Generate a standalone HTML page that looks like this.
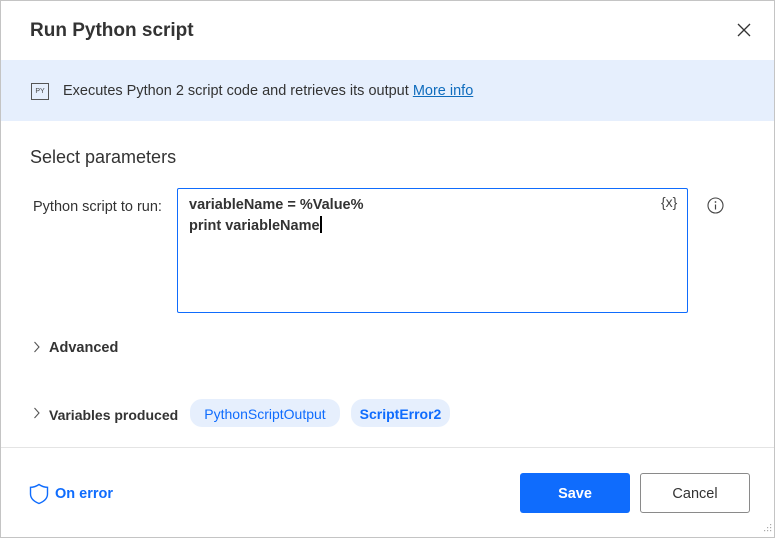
<!DOCTYPE html>
<html><head><meta charset="utf-8"><style>
*{margin:0;padding:0;box-sizing:border-box}
body{width:775px;height:538px;position:relative;background:#fff;font-family:"Liberation Sans",sans-serif;color:#242424;overflow:hidden}
.frame{position:absolute;left:0;top:0;width:775px;height:538px;border:1px solid #c4c4c4}
.a{position:absolute;white-space:nowrap}
</style></head><body>
<div class="frame"></div>
<div class="a" style="left:30px;top:20px;font-size:19px;font-weight:bold;color:#333">Run Python script</div>
<svg class="a" style="left:737px;top:23px" width="14" height="14" viewBox="0 0 14 14"><path d="M1 1L13 13M13 1L1 13" stroke="#333" stroke-width="1.3"/></svg>
<div class="a" style="left:1px;top:60px;width:773px;height:61px;background:#e6effd"></div>
<div class="a" style="left:31px;top:83px;width:18px;height:17px;border:1px solid #555;font-size:7px;line-height:15px;text-align:center;color:#444">PY</div>
<div class="a" style="left:63px;top:83px;font-size:14.5px;color:#333">Executes Python 2 script code and retrieves its output <span style="color:#0f6cbd;text-decoration:underline">More info</span></div>
<div class="a" style="left:30px;top:147px;font-size:18px;color:#333">Select parameters</div>
<div class="a" style="left:33px;top:199px;font-size:14.5px;color:#333">Python script to run:</div>
<div class="a" style="left:177px;top:188px;width:511px;height:125px;border:1px solid #0f6cfd;border-radius:2px"></div>
<div class="a" style="left:189px;top:195px;font-size:14.5px;font-weight:bold;color:#333;line-height:21px">variableName = %Value%<br>print variableName<span style="display:inline-block;width:2px;height:17px;background:#000;vertical-align:-3px"></span></div>
<div class="a" style="left:661px;top:194px;font-size:14px;color:#444">{x}</div>
<svg class="a" style="left:707px;top:197px" width="17" height="17" viewBox="0 0 17 17"><circle cx="8.5" cy="8.5" r="7.5" fill="none" stroke="#444" stroke-width="1.1"/><circle cx="8.5" cy="5" r=".9" fill="#444"/><path d="M8.5 7.5V12.5" stroke="#444" stroke-width="1.2"/></svg>
<svg class="a" style="left:33px;top:341px" width="8" height="12" viewBox="0 0 8 12"><path d="M1.5 1L6 6L1.5 11" fill="none" stroke="#555" stroke-width="1.1"/></svg>
<div class="a" style="left:49px;top:340px;font-size:14.5px;font-weight:bold;color:#333">Advanced</div>
<svg class="a" style="left:33px;top:407px" width="8" height="12" viewBox="0 0 8 12"><path d="M1.5 1L6 6L1.5 11" fill="none" stroke="#555" stroke-width="1.1"/></svg>
<div class="a" style="left:49px;top:407px;font-size:14px;font-weight:bold;color:#333">Variables produced</div>
<div class="a" style="left:190px;top:399px;width:150px;height:28px;border-radius:12px;background:#e6effd;font-size:14px;color:#0f6cfd;line-height:30px;text-align:center">PythonScriptOutput</div>
<div class="a" style="left:351px;top:399px;width:99px;height:28px;border-radius:12px;background:#e6effd;font-size:14px;font-weight:bold;color:#0f6cfd;line-height:30px;text-align:center">ScriptError2</div>
<div class="a" style="left:1px;top:447px;width:773px;height:1px;background:#e4e4e4"></div>
<svg class="a" style="left:29px;top:483px" width="20" height="22" viewBox="0 0 20 22"><path d="M10 1.5C7 3.5 4.5 4.3 1.5 4.3V11C1.5 15.5 5 18.5 10 20.5C15 18.5 18.5 15.5 18.5 11V4.3C15.5 4.3 13 3.5 10 1.5Z" fill="none" stroke="#0f6cfd" stroke-width="1.4"/></svg>
<div class="a" style="left:55px;top:486px;font-size:14.5px;font-weight:bold;color:#0f6cfd">On error</div>
<div class="a" style="left:520px;top:473px;width:110px;height:40px;background:#0f6cfd;border-radius:3px;color:#fff;font-size:14.5px;font-weight:bold;line-height:42px;text-align:center">Save</div>
<div class="a" style="left:640px;top:473px;width:110px;height:40px;border:1px solid #8a8a8a;border-radius:3px;color:#333;font-size:14.5px;line-height:40px;text-align:center">Cancel</div>
<svg class="a" style="left:762px;top:524px" width="10" height="10" viewBox="0 0 10 10"><g fill="#aaa"><rect x="8" y="0" width="1.2" height="1.2"/><rect x="5" y="3" width="1.2" height="1.2"/><rect x="8" y="3" width="1.2" height="1.2"/><rect x="2" y="6" width="1.2" height="1.2"/><rect x="5" y="6" width="1.2" height="1.2"/><rect x="8" y="6" width="1.2" height="1.2"/></g></svg>
</body></html>
